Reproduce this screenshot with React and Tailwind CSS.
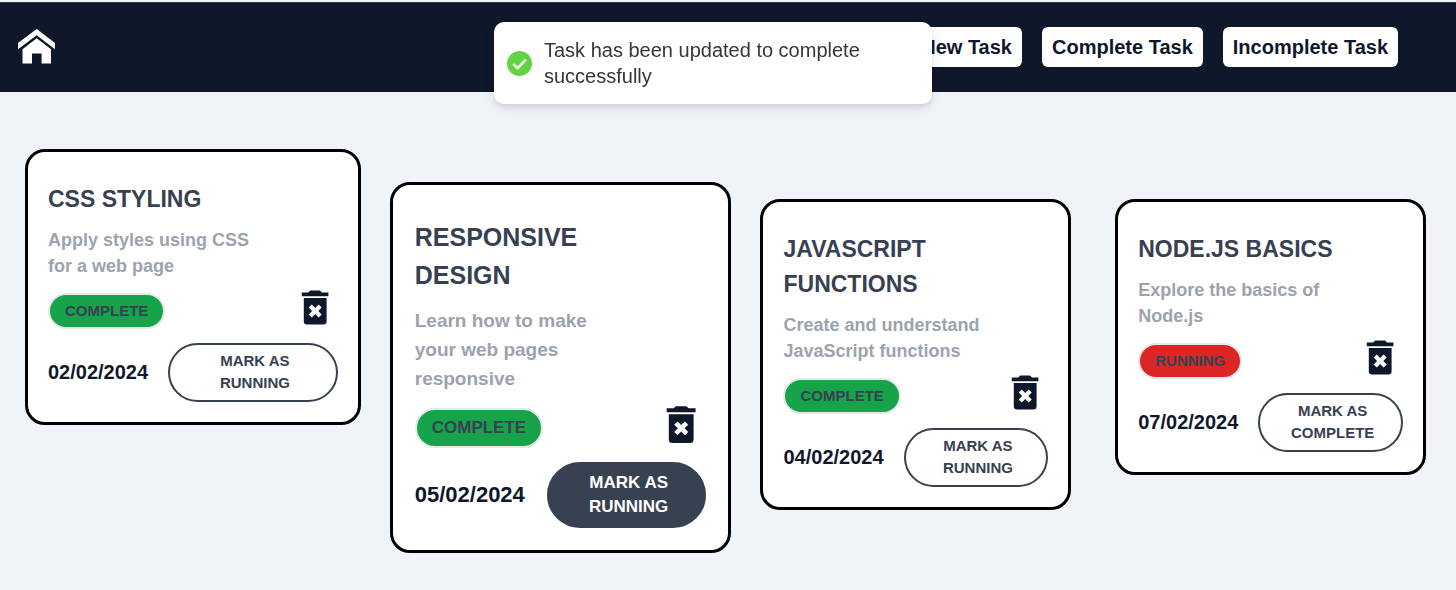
const tasks = [
  {
    title: "CSS Styling",
    description: "Apply styles using CSS for a web page",
    status: "Complete",
    date: "02/02/2024",
    place: "",
  },
  {
    title: "Responsive Design",
    description: "Learn how to make your web pages responsive",
    status: "Complete",
    date: "05/02/2024",
    place: "mt-[33px]",
    active: true,
  },
  {
    title: "JavaScript Functions",
    description: "Create and understand JavaScript functions",
    status: "Complete",
    date: "04/02/2024",
    place: "mt-[50px]",
  },
  {
    title: "Node.js Basics",
    description: "Explore the basics of Node.js",
    status: "Running",
    date: "07/02/2024",
    place: "mt-[50px] ml-[15px]",
  },
];

const regular = {
  card: "px-5 pt-[30px] pb-5",
  title: "text-[23px] leading-[35px]",
  description: "mt-[10px] text-[18px] leading-[26px]",
  row: "mt-[5px]",
  badge: "px-[15px] py-[5px] text-[15px] leading-[22px]",
  icon: "size-[46px]",
  footer: "gap-5",
  date: "text-[20px]",
  button: "min-h-[59px] pb-[2px] text-[#374151] text-[15px] leading-[22px]",
};

const enlarged = {
  card: "px-[22px] pt-[33px] pb-[22px]",
  title: "text-[25px] leading-[38px]",
  description: "mt-3 text-[19px] leading-[29px]",
  row: "mt-[6px]",
  badge: "px-[15px] py-[6px] text-[17px] leading-[24px]",
  icon: "size-[50px]",
  footer: "gap-[22px]",
  date: "text-[22px]",
  button: "min-h-[66px] bg-[#374151] text-white text-[17px] leading-[24px]",
};

function TrashIcon({ className }) {
  return (
    <svg viewBox="0 0 46 46" className={className} fill="currentColor">
      <path d="M9.8 8.4H16.2L18.2 6.6H28L30 8.4H36.4V12.2H9.8Z" />
      <path
        fillRule="evenodd"
        d="M11.8 14H34.6V37.2A3.3 3.3 0 0 1 31.3 40.5H15.1A3.3 3.3 0 0 1 11.8 37.2ZM23.2 24 19.8 20.6 16.7 23.6 20.1 27 16.7 30.4 19.8 33.4 23.2 30 26.6 33.4 29.7 30.4 26.3 27 29.7 23.6 26.6 20.6Z"
      />
    </svg>
  );
}

function TaskCard({ task }) {
  const s = task.active ? enlarged : regular;
  const done = task.status === "Complete";
  return (
    <article
      className={`min-w-0 rounded-[20px] border-[3px] border-black bg-white font-bold ${task.place} ${s.card}`}
    >
      <h2 className={`max-w-[210px] uppercase text-[#374151] ${s.title}`}>{task.title}</h2>
      <p className={`max-w-[210px] text-[#9ca3af] ${s.description}`}>{task.description}</p>
      <div className={`flex items-end justify-between ${s.row}`}>
        <span
          className={`mb-px rounded-full border-2 border-[#e5e7eb] uppercase text-[#374151] ${
            done ? "bg-[#16a34a]" : "bg-[#dc2626]"
          } ${s.badge}`}
        >
          {task.status}
        </span>
        <button type="button" aria-label="Delete task" className="text-[#0f172a]">
          <TrashIcon className={s.icon} />
        </button>
      </div>
      <div className={`mt-[13px] flex items-center ${s.footer}`}>
        <time className={`pb-[2px] text-[#0f172a] ${s.date}`}>{task.date}</time>
        <button
          type="button"
          className={`flex flex-1 items-center justify-center rounded-full border-2 border-[#374151] pl-1 uppercase ${s.button}`}
        >
          <span className="max-w-[100px]">Mark as {done ? "Running" : "Complete"}</span>
        </button>
      </div>
    </article>
  );
}

function NavButton({ children }) {
  return (
    <button
      type="button"
      className="h-10 whitespace-nowrap rounded-[6px] bg-white px-[10px] text-[20px] font-bold text-[#0f172a]"
    >
      {children}
    </button>
  );
}

export default function App() {
  return (
    <div className="min-h-screen bg-[#f0f4f9] pt-[2px] font-['Liberation_Sans',Arial,sans-serif]">
      <header className="flex h-[90px] items-center justify-between border-t border-[#33394a] bg-[#0f172a] pr-[58px] pb-[2px] pl-[18px]">
        <a href="#" aria-label="Home">
          <svg viewBox="0 0 37 35" className="h-[35px] w-[37px] fill-white">
            <path d="M18.7 0 37 14v6.3L18.7 6.2 0 20.3V14Z" />
            <path d="M18.7 9.2 33 20.2V34.4H23.6V24.6H14V34.4H4.5V20.2Z" />
          </svg>
        </a>
        <nav className="flex gap-5">
          <NavButton>New Task</NavButton>
          <NavButton>Complete Task</NavButton>
          <NavButton>Incomplete Task</NavButton>
        </nav>
      </header>

      <main className="grid grid-cols-[336fr_342fr_311fr_326fr] items-start gap-[29px] pt-[57px] pr-[30px] pb-[37px] pl-[25px]">
        {tasks.map((task) => (
          <TaskCard key={task.title} task={task} />
        ))}
      </main>

      <div className="pointer-events-none fixed inset-x-0 top-[22px] flex justify-center pr-[30px]">
        <div
          role="status"
          className="flex w-[438px] items-center rounded-[10px] bg-white py-[15px] pr-[18px] pl-[13px] text-[20px] leading-[26px] text-[#363636] shadow-[0_4px_12px_rgba(0,0,0,0.1),0_4px_4px_rgba(0,0,0,0.05)]"
        >
          <svg viewBox="0 0 25 25" className="size-[25px] shrink-0">
            <circle cx="12.5" cy="12.5" r="12.5" fill="#61d345" />
            <path d="M6.2 13 10.6 17.2 18.8 8.6" fill="none" stroke="#effbec" strokeWidth="2.4" />
          </svg>
          <p className="ml-3">Task has been updated to complete successfully</p>
        </div>
      </div>
    </div>
  );
}
